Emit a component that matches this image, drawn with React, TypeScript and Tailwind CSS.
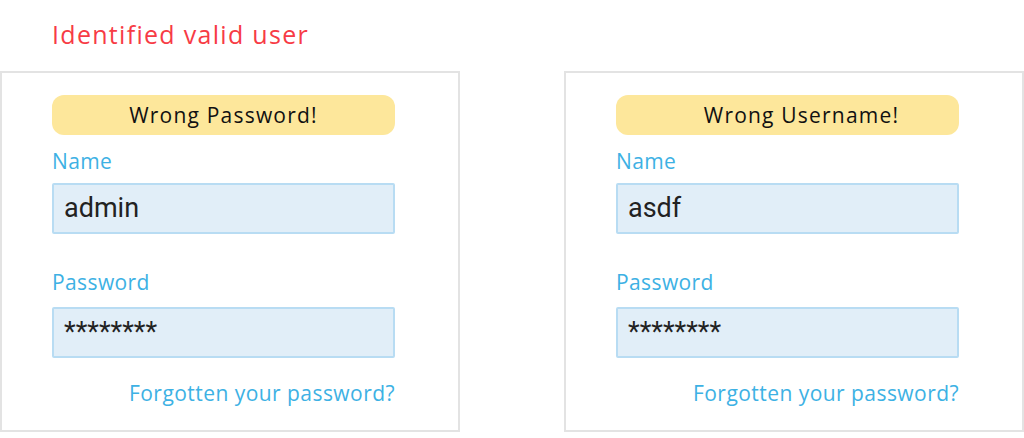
const labelFont = "font-['Open_Sans','Noto_Sans',sans-serif] [font-variant-ligatures:none]";

function LoginCard({ message, user, msgShift }: { message: string; user: string; msgShift?: boolean }) {
  return (
    <div className="w-[460px] h-[361px] border-2 border-[#e3e3e3] bg-white pl-[50px] pt-[22px]">
      <div className="w-[343px]">
        <div
          className={`h-[40px] rounded-[12px] bg-[#fde79b] flex items-center justify-center pt-[2px] text-[21px] tracking-[1.2px] text-[#111] ${labelFont} ${msgShift ? "pl-[28px]" : ""}`}
        >
          {message}
        </div>
        <div className={`mt-[14px] text-[21px] leading-[25px] tracking-[0.4px] text-[#3db1e4] ${labelFont}`}>Name</div>
        <div className="mt-[9px] h-[51px] border-2 border-[#b8dcf3] rounded-[2px] bg-[#e1eef8] flex items-center pl-[10px] text-[27px] text-[#222] font-['Roboto',sans-serif]">
          {user}
        </div>
        <div className={`mt-[36px] text-[21px] leading-[25px] tracking-[0.4px] text-[#3db1e4] ${labelFont}`}>Password</div>
        <div className="mt-[12px] h-[51px] border-2 border-[#b8dcf3] rounded-[2px] bg-[#e1eef8] flex items-center pl-[10px] text-[27px] text-[#222] font-['Roboto',sans-serif]">
          ********
        </div>
        <div className={`mt-[22px] text-right text-[21px] leading-[26px] tracking-[0.45px] text-[#3db1e4] ${labelFont}`}>
          Forgotten your password?
        </div>
      </div>
    </div>
  );
}

export default function App() {
  return (
    <div className="w-[1024px] h-[438px] bg-white overflow-hidden">
      <div className={`pt-[19px] pl-[52px] text-[25px] leading-[30px] tracking-[1.3px] text-[#f73b45] ${labelFont}`}>
        Identified valid user
      </div>
      <div className="mt-[22px] flex justify-between">
        <LoginCard message="Wrong Password!" user="admin" />
        <LoginCard message="Wrong Username!" user="asdf" msgShift />
      </div>
    </div>
  );
}
